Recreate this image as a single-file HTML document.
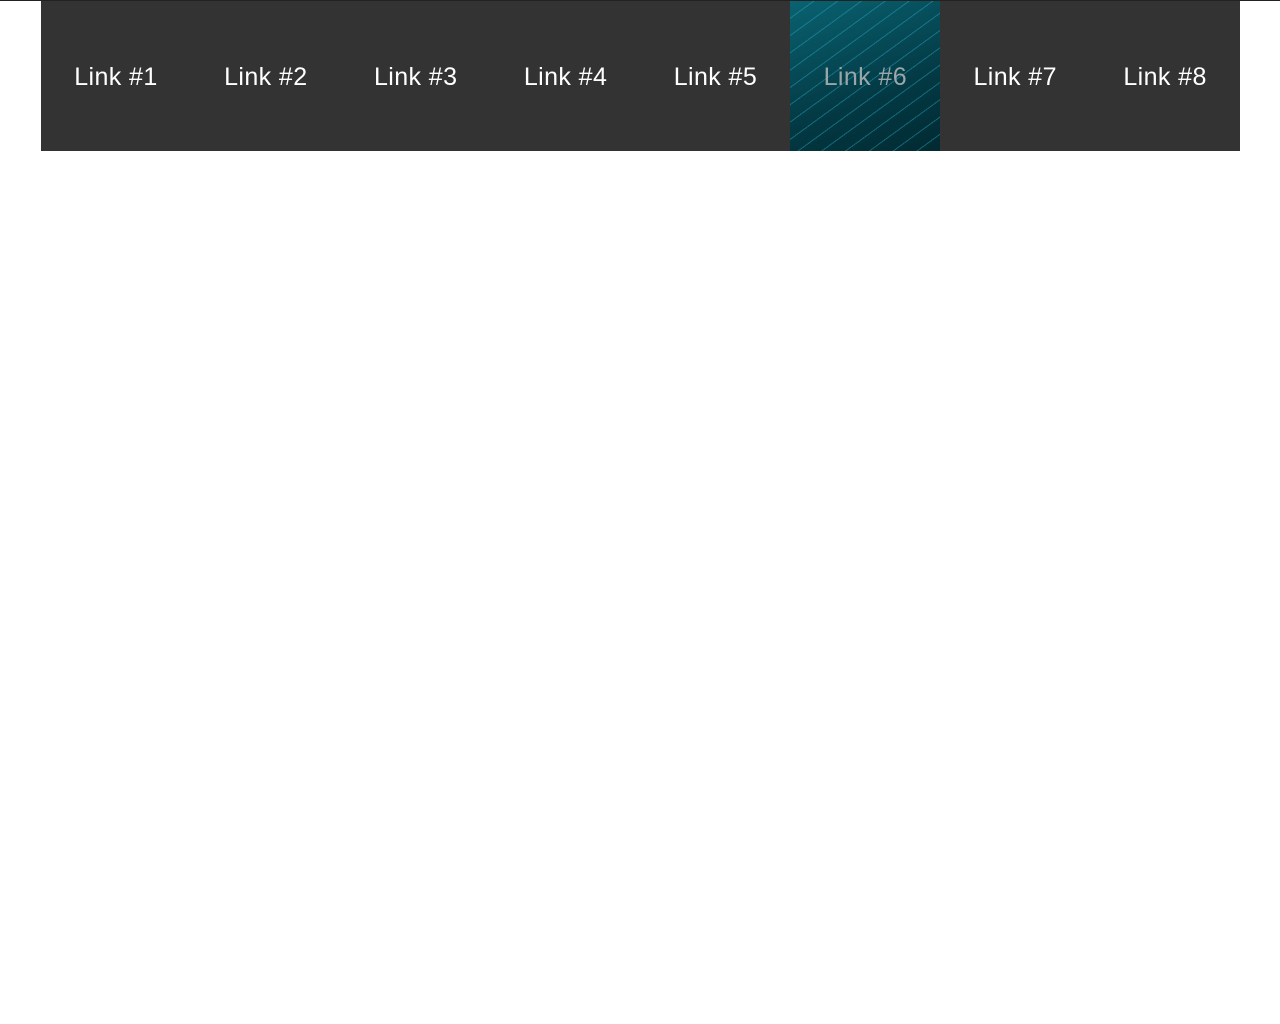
<!DOCTYPE html>
<html><head><style>
html,body{margin:0;padding:0;background:#fff;width:1280px;height:1024px;overflow:hidden}
.top{position:absolute;left:0;top:0;width:1280px;height:1px;background:#222}
nav{position:absolute;left:41px;top:1px;width:1199px;height:150px;background:#333;display:flex}
nav a{flex:1 1 0;height:150px;line-height:152px;text-align:center;color:#fff;font-family:"Liberation Sans",sans-serif;font-size:25px;letter-spacing:0.4px;text-decoration:none;position:relative}
nav a.act{color:#9aa6a8;background:
repeating-linear-gradient(-36deg,transparent 0 13px,rgba(40,170,190,.45) 13px 14px),
linear-gradient(160deg,#0a6271,#033a45 60%,#012a32);}
</style></head><body>
<div class="top"></div>
<nav>
<a>Link #1</a><a>Link #2</a><a>Link #3</a><a>Link #4</a><a>Link #5</a><a class="act">Link #6</a><a>Link #7</a><a>Link #8</a>
</nav>
</body></html>
